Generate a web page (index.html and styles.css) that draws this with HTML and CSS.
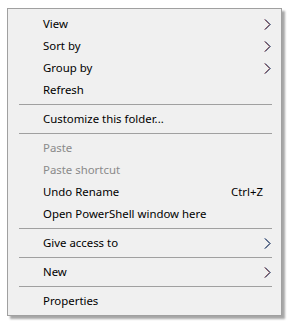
FILE: index.html
```html
<!DOCTYPE html>
<html lang="en">
<head>
    <meta charset="UTF-8">
    <meta name="viewport" content="width=device-width, initial-scale=1.0">
    <title>Context menu</title>
    <link rel="stylesheet" href="styles.css">
</head>
<body>
    <ul class="menu">
        <li class="item has-sub"><span class="label">View</span><svg class="arrow" viewBox="0 0 7 11"><polyline class="fringe-r" points="0.5,0.5 5.5,5.5 0.5,10.5"/><polyline class="fringe-b" points="1.5,0.5 6.5,5.5 1.5,10.5"/><polyline class="core" points="1,0.5 6,5.5 1,10.5"/></svg></li>
        <li class="item has-sub"><span class="label">Sort by</span><svg class="arrow" viewBox="0 0 7 11"><polyline class="fringe-r" points="0.5,0.5 5.5,5.5 0.5,10.5"/><polyline class="fringe-b" points="1.5,0.5 6.5,5.5 1.5,10.5"/><polyline class="core" points="1,0.5 6,5.5 1,10.5"/></svg></li>
        <li class="item has-sub"><span class="label">Group by</span><svg class="arrow" viewBox="0 0 7 11"><polyline class="fringe-r" points="0.5,0.5 5.5,5.5 0.5,10.5"/><polyline class="fringe-b" points="1.5,0.5 6.5,5.5 1.5,10.5"/><polyline class="core" points="1,0.5 6,5.5 1,10.5"/></svg></li>
        <li class="item"><span class="label">Refresh</span></li>
        <li class="separator"></li>
        <li class="item"><span class="label">Customize this folder...</span></li>
        <li class="separator"></li>
        <li class="item disabled"><span class="label">Paste</span></li>
        <li class="item disabled"><span class="label">Paste shortcut</span></li>
        <li class="item"><span class="label">Undo Rename</span><span class="shortcut">Ctrl+Z</span></li>
        <li class="item"><span class="label">Open PowerShell window here</span></li>
        <li class="separator"></li>
        <li class="item has-sub"><span class="label">Give access to</span><svg class="arrow blue" viewBox="0 0 7 11"><polyline class="fringe-r" points="0.5,0.5 5.5,5.5 0.5,10.5"/><polyline class="fringe-b" points="1.5,0.5 6.5,5.5 1.5,10.5"/><polyline class="core" points="1,0.5 6,5.5 1,10.5"/></svg></li>
        <li class="separator"></li>
        <li class="item has-sub"><span class="label">New</span><svg class="arrow" viewBox="0 0 7 11"><polyline class="fringe-r" points="0.5,0.5 5.5,5.5 0.5,10.5"/><polyline class="fringe-b" points="1.5,0.5 6.5,5.5 1.5,10.5"/><polyline class="core" points="1,0.5 6,5.5 1,10.5"/></svg></li>
        <li class="separator"></li>
        <li class="item"><span class="label">Properties</span></li>
    </ul>
</body>
</html>
```

FILE: styles.css
```css
:root {
    --menu-bg: #f0f0f0;
    --menu-border: #a0a0a0;
    --sep-color: #a0a0a0;
    --text-color: #000000;
    --disabled-color: #8a8a8a;
}

* {
    margin: 0;
    padding: 0;
    box-sizing: border-box;
}

body {
    font-family: 'Noto Sans', 'Open Sans', sans-serif;
    font-size: 11.4px;
    background: #ffffff;
    color: var(--text-color);
    padding: 8px 7px;
}

.menu {
    list-style: none;
    width: 275px;
    background: var(--menu-bg);
    border: 1px solid var(--menu-border);
    padding: 3px 0 4px;
    box-shadow: 3px 3px 2px rgba(0, 0, 0, 0.35);
}

.item {
    display: flex;
    align-items: center;
    height: 22px;
    line-height: 22px;
    padding: 1px 10px 0 35px;
}

.label {
    flex: 1;
    white-space: nowrap;
}

.disabled {
    color: var(--disabled-color);
}

.shortcut {
    padding-right: 8px;
}

.arrow {
    width: 7px;
    height: 11px;
    margin-top: 2px;
    fill: none;
    stroke-width: 1;
}

.arrow .fringe-r {
    stroke: #d0506a;
    opacity: 0.7;
}

.arrow .fringe-b {
    stroke: #4a7ad8;
    opacity: 0.6;
}

.arrow .core {
    stroke: #3a3a3a;
}

.arrow.blue .fringe-r {
    stroke: #5a8ae0;
}

.separator {
    height: 7px;
    padding-top: 4px;
    margin: 0 9px 0 11px;
}

.separator::before {
    content: '';
    display: block;
    border-top: 1px solid var(--sep-color);
}
```
